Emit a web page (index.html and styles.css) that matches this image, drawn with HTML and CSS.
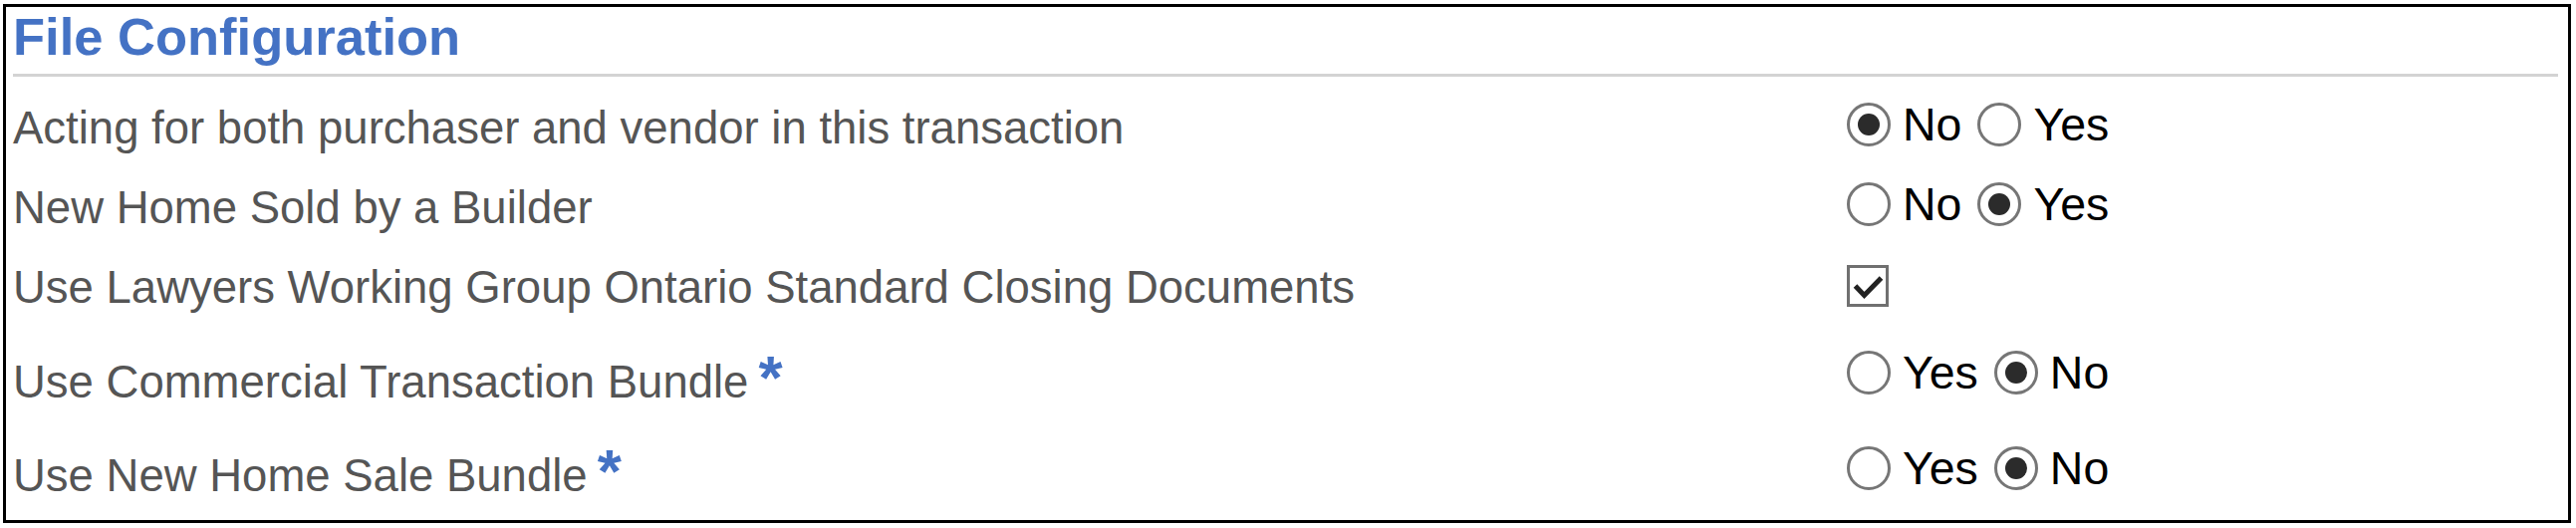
FILE: index.html
```html
<!DOCTYPE html>
<html>
<head>
<meta charset="utf-8">
<link rel="stylesheet" href="styles.css">
</head>
<body>
<div class="panel">
  <h2 class="title">File Configuration</h2>
  <div class="rule"></div>
  <div class="rows">
    <div class="row r1">
      <div class="label">Acting for both purchaser and vendor in this transaction</div>
      <div class="control">
        <span class="opt"><span class="radio on"></span><span class="opt-text">No</span></span>
        <span class="opt"><span class="radio"></span><span class="opt-text">Yes</span></span>
      </div>
    </div>
    <div class="row r2">
      <div class="label">New Home Sold by a Builder</div>
      <div class="control">
        <span class="opt"><span class="radio"></span><span class="opt-text">No</span></span>
        <span class="opt"><span class="radio on"></span><span class="opt-text">Yes</span></span>
      </div>
    </div>
    <div class="row r3">
      <div class="label">Use Lawyers Working Group Ontario Standard Closing Documents</div>
      <div class="control">
        <span class="checkbox"><svg viewBox="0 0 35 35" width="35" height="35"><path d="M4.5 17 L13.5 26.5 L30.5 9" fill="none" stroke="#222" stroke-width="5"/></svg></span>
      </div>
    </div>
    <div class="row r4 tall">
      <div class="label">Use Commercial Transaction Bundle<span class="req">*</span></div>
      <div class="control">
        <span class="opt"><span class="radio"></span><span class="opt-text">Yes</span></span>
        <span class="opt"><span class="radio on"></span><span class="opt-text">No</span></span>
      </div>
    </div>
    <div class="row r5 tall">
      <div class="label">Use New Home Sale Bundle<span class="req">*</span></div>
      <div class="control">
        <span class="opt"><span class="radio"></span><span class="opt-text">Yes</span></span>
        <span class="opt"><span class="radio on"></span><span class="opt-text">No</span></span>
      </div>
    </div>
  </div>
</div>
</body>
</html>
```
FILE: styles.css
```css
html, body {
  margin: 0;
  padding: 0;
  background: #ffffff;
}

body {
  font-family: "Liberation Sans", Arial, sans-serif;
}

.panel {
  box-sizing: border-box;
  margin: 4px 0 0 3px;
  width: 2578px;
  height: 521px;
  border: 3px solid #000000;
  padding: 1px 10px 0 7px;
}

.title {
  margin: 0;
  font-size: 52.5px;
  line-height: 58px;
  font-weight: bold;
  color: #4472c4;
}

.rule {
  margin-top: 8px;
  height: 3px;
  background: #d3d3d3;
}

.rows {
  padding-top: 12px;
}

.row {
  display: flex;
  height: 80px;
}

.row.tall {
  height: 94px;
}

.label {
  width: 1841px;
  flex: none;
  font-size: 45.5px;
  line-height: 80px;
  color: #555555;
  white-space: nowrap;
}

.row.tall .label {
  padding-top: 15px;
}

.req {
  display: inline-block;
  margin-left: 10px;
  color: #4472c4;
  font-weight: bold;
  font-size: 62px;
  line-height: 0;
  vertical-align: -1px;
}

.control {
  display: flex;
  align-items: center;
  gap: 16px;
  align-self: center;
}

.r1 .control, .r2 .control {
  margin-bottom: 9px;
}

.r3 .control {
  margin-bottom: 4px;
}

.r4 .control {
  margin-bottom: 5px;
}

.opt {
  display: flex;
  align-items: center;
  gap: 12px;
}

.radio {
  box-sizing: border-box;
  width: 44px;
  height: 44px;
  border: 3.5px solid #767676;
  border-radius: 50%;
  background: #ffffff;
  display: flex;
  align-items: center;
  justify-content: center;
}

.radio.on::after {
  content: "";
  width: 22px;
  height: 22px;
  border-radius: 50%;
  background: #2b2b2b;
}

.opt-text {
  font-size: 46.5px;
  line-height: 44px;
  color: #000000;
}

.checkbox {
  box-sizing: border-box;
  width: 42px;
  height: 42px;
  border: 3.5px solid #707070;
  background: #ffffff;
  display: flex;
  align-items: center;
  justify-content: center;
}

.checkbox svg {
  display: block;
}
```
